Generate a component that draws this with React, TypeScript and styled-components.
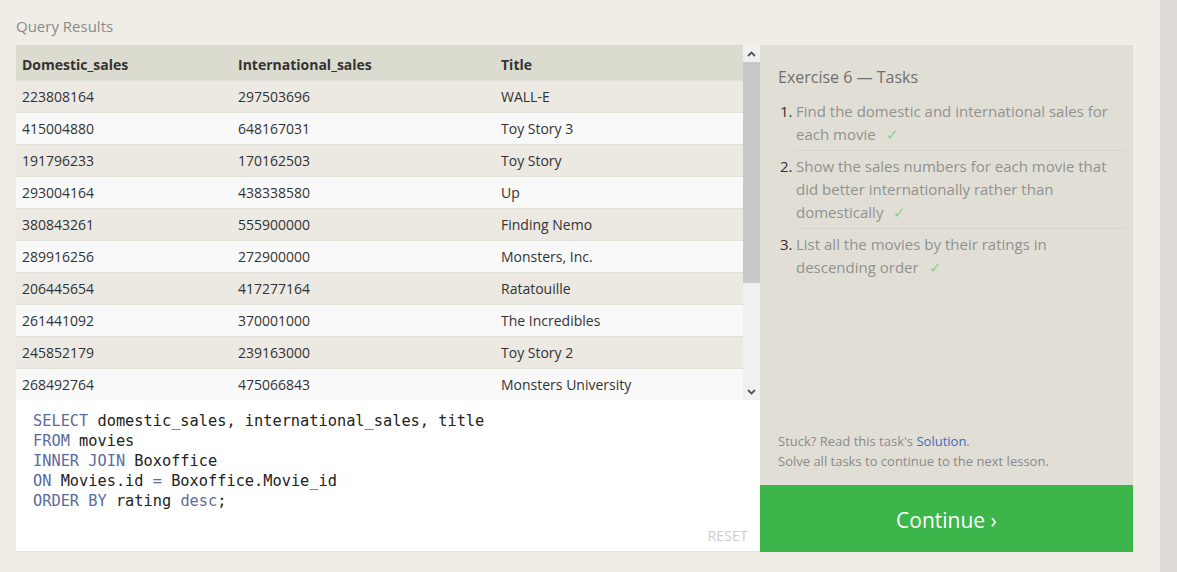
import React from 'react';
import styled, { createGlobalStyle } from 'styled-components';

const GlobalStyle = createGlobalStyle`
  html, body {
    margin: 0;
    padding: 0;
    background: #efede6;
  }
  body {
    font-family: 'Open Sans', 'Liberation Sans', sans-serif;
  }
`;

const rows = [
  ['223808164', '297503696', 'WALL-E'],
  ['415004880', '648167031', 'Toy Story 3'],
  ['191796233', '170162503', 'Toy Story'],
  ['293004164', '438338580', 'Up'],
  ['380843261', '555900000', 'Finding Nemo'],
  ['289916256', '272900000', 'Monsters, Inc.'],
  ['206445654', '417277164', 'Ratatouille'],
  ['261441092', '370001000', 'The Incredibles'],
  ['245852179', '239163000', 'Toy Story 2'],
  ['268492764', '475066843', 'Monsters University'],
];

const Page = styled.div`
  display: flex;
  min-height: 572px;
`;

const Main = styled.div`
  flex: 1;
  padding: 16px 27px 20px 16px;
`;

const Strip = styled.div`
  width: 17px;
  background: #dfdbd8;
`;

const Heading = styled.div`
  font-size: 15px;
  line-height: 20px;
  color: #8a8a8a;
  margin-bottom: 9px;
`;

const Layout = styled.div`
  display: grid;
  grid-template-columns: 744px 373px;
`;

const LeftCol = styled.div`
  display: flex;
  flex-direction: column;
`;

const TableWrap = styled.div`
  display: flex;
  height: 355px;
`;

const Table = styled.div`
  flex: 1;
  display: flex;
  flex-direction: column;
`;

const Row = styled.div<{ $bg: string; $head?: boolean }>`
  display: grid;
  grid-template-columns: 216px 263px 1fr;
  height: ${p => (p.$head ? '35px' : '32px')};
  box-sizing: border-box;
  padding-top: ${p => (p.$head ? '3px' : '0')};
  align-items: center;
  background: ${p => p.$bg};
  border-top: ${p => (p.$head ? 'none' : '1px solid #e2e1da')};
  font-size: 14px;
  font-weight: ${p => (p.$head ? 700 : 400)};
  color: #333;
`;

const Cell = styled.div`
  padding-left: 6px;
  white-space: nowrap;
`;

const Scrollbar = styled.div`
  width: 17px;
  display: flex;
  flex-direction: column;
  background: #f0f0f0;
`;

const ArrowBox = styled.div`
  height: 17px;
  display: flex;
  align-items: center;
  justify-content: center;
  background: #f0f0f0;
`;

const Thumb = styled.div`
  height: 221px;
  background: #c8c8c8;
`;

const Track = styled.div`
  flex: 1;
`;

const Editor = styled.div`
  height: 152px;
  background: #fff;
  border-bottom: 1px solid #e4e2db;
  padding: 11px 17px 0;
  box-sizing: border-box;
  position: relative;
`;

const Code = styled.pre`
  margin: 0;
  font-family: 'DejaVu Sans Mono', 'Liberation Mono', monospace;
  font-size: 15.3px;
  line-height: 20px;
  color: #222;
`;

const Kw = styled.span`
  color: #5a6c9e;
`;

const Reset = styled.div`
  position: absolute;
  right: 12px;
  bottom: 6px;
  font-size: 14px;
  color: #cdcdcd;
  letter-spacing: 0.2px;
`;

const RightCol = styled.div`
  display: flex;
  flex-direction: column;
`;

const Panel = styled.div`
  height: 440px;
  background: #e1dfd5;
  padding: 20px 8px 0 18px;
  box-sizing: border-box;
  display: flex;
  flex-direction: column;
`;

const PanelTitle = styled.div`
  font-size: 16px;
  line-height: 24px;
  color: #6f6f6f;
  margin-bottom: 11px;
`;

const TaskList = styled.ol`
  margin: 0;
  padding: 0 0 0 18px;
  list-style: none;
  counter-reset: task;
  flex: 1;
`;

const Task = styled.li<{ $last?: boolean }>`
  counter-increment: task;
  position: relative;
  font-size: 15px;
  line-height: 23px;
  color: #919191;
  padding: 0 15px 4px 0;
  margin-bottom: 4px;
  border-bottom: ${p => (p.$last ? 'none' : '1px solid #d6d4ca')};

  &::before {
    content: counter(task) '.';
    position: absolute;
    left: -16px;
    color: #333;
  }
`;

const Check = styled.span`
  display: inline-block;
  color: #8ccf8f;
  margin-left: 10px;
`;

const Hint = styled.div`
  font-size: 13px;
  line-height: 20px;
  color: #8a8a8a;
  margin-bottom: 14px;
`;

const Link = styled.span`
  color: #3a6cc3;
`;

const ContinueButton = styled.div`
  height: 67px;
  box-sizing: border-box;
  padding-top: 3px;
  background: #3cb54b;
  color: #fff;
  font-size: 21px;
  display: flex;
  align-items: center;
  justify-content: center;
`;

const Chevron = ({ up }: { up?: boolean }) => (
  <svg width="9" height="6" viewBox="0 0 9 6">
    <path
      d={up ? 'M1 5 L4.5 1.5 L8 5' : 'M1 1 L4.5 4.5 L8 1'}
      fill="none"
      stroke="#555"
      strokeWidth="1.8"
    />
  </svg>
);

export default function App() {
  return (
    <>
      <GlobalStyle />
      <Page>
        <Main>
          <Heading>Query Results</Heading>
          <Layout>
            <LeftCol>
              <TableWrap>
                <Table>
                  <Row $bg='#dcdbd0' $head>
                    <Cell>Domestic_sales</Cell>
                    <Cell>International_sales</Cell>
                    <Cell>Title</Cell>
                  </Row>
                  {rows.map((r, i) => (
                    <Row key={r[2]} $bg={i % 2 === 0 ? '#ebe9e2' : '#f9f9f9'}>
                      {r.map(v => (
                        <Cell key={v}>{v}</Cell>
                      ))}
                    </Row>
                  ))}
                </Table>
                <Scrollbar>
                  <ArrowBox>
                    <Chevron up />
                  </ArrowBox>
                  <Thumb />
                  <Track />
                  <ArrowBox>
                    <Chevron />
                  </ArrowBox>
                </Scrollbar>
              </TableWrap>
              <Editor>
                <Code>
                  <Kw>SELECT</Kw> domestic_sales, international_sales, title{'\n'}
                  <Kw>FROM</Kw> movies{'\n'}
                  <Kw>INNER JOIN</Kw> Boxoffice{'\n'}
                  <Kw>ON</Kw> Movies.id <Kw>=</Kw> Boxoffice.Movie_id{'\n'}
                  <Kw>ORDER BY</Kw> rating <Kw>desc</Kw>;
                </Code>
                <Reset>RESET</Reset>
              </Editor>
            </LeftCol>
            <RightCol>
              <Panel>
                <PanelTitle>Exercise 6 — Tasks</PanelTitle>
                <TaskList>
                  <Task>
                    Find the domestic and international sales for each movie
                    <Check>✓</Check>
                  </Task>
                  <Task>
                    Show the sales numbers for each movie that did better internationally rather than
                    domestically
                    <Check>✓</Check>
                  </Task>
                  <Task $last>
                    List all the movies by their ratings in descending order
                    <Check>✓</Check>
                  </Task>
                </TaskList>
                <Hint>
                  Stuck? Read this task's <Link>Solution</Link>.
                  <br />
                  Solve all tasks to continue to the next lesson.
                </Hint>
              </Panel>
              <ContinueButton>Continue ›</ContinueButton>
            </RightCol>
          </Layout>
        </Main>
        <Strip />
      </Page>
    </>
  );
}
